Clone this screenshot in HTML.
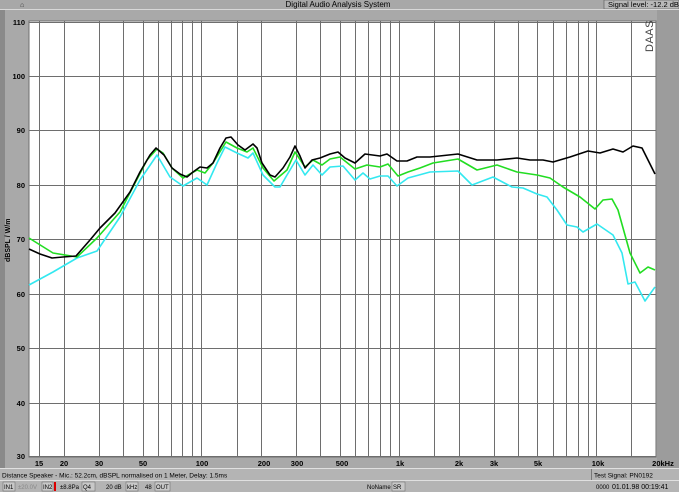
<!DOCTYPE html>
<html><head><meta charset="utf-8"><style>
html,body{margin:0;padding:0;width:679px;height:499px;overflow:hidden;background:#fff;font-family:"Liberation Sans",sans-serif}
svg{display:block}
</style></head><body>
<svg width="679" height="499" viewBox="0 0 679 499" font-family="Liberation Sans, sans-serif">
<rect x="0" y="0" width="679" height="499" fill="#fff"/>
<!-- title bar -->
<rect x="0" y="0" width="679" height="9" fill="#a8a8a8"/>
<text x="338" y="7" font-size="8" text-anchor="middle" fill="#000">Digital Audio Analysis System</text>
<rect x="604" y="0" width="75" height="9" fill="#b8b8b8" stroke="#555" stroke-width="0.6"/>
<text x="608" y="7" font-size="7.5" fill="#000">Signal level: -12.2 dBPa</text>
<text x="20" y="7" font-size="7" fill="#333">⌂</text>
<rect x="0" y="9" width="679" height="1" fill="#d8d8d8"/>
<!-- main gray -->
<rect x="0" y="10" width="679" height="458" fill="#a9a9a9"/>
<rect x="0" y="10" width="5" height="458" fill="#8a8a8a"/>
<rect x="657" y="10" width="22" height="458" fill="#9c9c9c"/>
<!-- plot -->
<rect x="29" y="21" width="627" height="436" fill="#fff"/>
<g stroke="#6e6e6e" stroke-width="1">
<line x1="29" y1="22.5" x2="656" y2="22.5"/>
<line x1="29" y1="76.5" x2="656" y2="76.5"/>
<line x1="29" y1="130.5" x2="656" y2="130.5"/>
<line x1="29" y1="185.5" x2="656" y2="185.5"/>
<line x1="29" y1="239.5" x2="656" y2="239.5"/>
<line x1="29" y1="294.5" x2="656" y2="294.5"/>
<line x1="29" y1="348.5" x2="656" y2="348.5"/>
<line x1="29" y1="403.5" x2="656" y2="403.5"/>
<line x1="29" y1="456.5" x2="656" y2="456.5"/>
</g>
<g stroke="#6e6e6e" stroke-width="1" id="vg">
<line x1="39.5" y1="21" x2="39.5" y2="457"/>
<line x1="64.5" y1="21" x2="64.5" y2="457"/>
<line x1="99.5" y1="21" x2="99.5" y2="457"/>
<line x1="123.5" y1="21" x2="123.5" y2="457"/>
<line x1="143.5" y1="21" x2="143.5" y2="457"/>
<line x1="158.5" y1="21" x2="158.5" y2="457"/>
<line x1="171.5" y1="21" x2="171.5" y2="457"/>
<line x1="182.5" y1="21" x2="182.5" y2="457"/>
<line x1="192.5" y1="21" x2="192.5" y2="457"/>
<line x1="201.5" y1="21" x2="201.5" y2="457"/>
<line x1="237.5" y1="21" x2="237.5" y2="457"/>
<line x1="261.5" y1="21" x2="261.5" y2="457"/>
<line x1="296.5" y1="21" x2="296.5" y2="457"/>
<line x1="320.5" y1="21" x2="320.5" y2="457"/>
<line x1="340.5" y1="21" x2="340.5" y2="457"/>
<line x1="355.5" y1="21" x2="355.5" y2="457"/>
<line x1="368.5" y1="21" x2="368.5" y2="457"/>
<line x1="380.5" y1="21" x2="380.5" y2="457"/>
<line x1="390.5" y1="21" x2="390.5" y2="457"/>
<line x1="399.5" y1="21" x2="399.5" y2="457"/>
<line x1="434.5" y1="21" x2="434.5" y2="457"/>
<line x1="459.5" y1="21" x2="459.5" y2="457"/>
<line x1="494.5" y1="21" x2="494.5" y2="457"/>
<line x1="518.5" y1="21" x2="518.5" y2="457"/>
<line x1="537.5" y1="21" x2="537.5" y2="457"/>
<line x1="553.5" y1="21" x2="553.5" y2="457"/>
<line x1="566.5" y1="21" x2="566.5" y2="457"/>
<line x1="578.5" y1="21" x2="578.5" y2="457"/>
<line x1="588.5" y1="21" x2="588.5" y2="457"/>
<line x1="596.5" y1="21" x2="596.5" y2="457"/>
<line x1="631.5" y1="21" x2="631.5" y2="457"/>
</g>
<rect x="29" y="21" width="627" height="436" fill="none" stroke="#6e6e6e" stroke-width="1"/>
<!-- DAAS -->
<text transform="translate(653,52) rotate(-90)" font-size="11" fill="#444" letter-spacing="0.5">DAAS</text>
<!-- y labels -->
<g font-size="7.5" font-weight="bold" fill="#000" text-anchor="end">
<text x="25" y="25">110</text><text x="25" y="79">100</text><text x="25" y="133">90</text>
<text x="25" y="188">80</text><text x="25" y="242">70</text><text x="25" y="297">60</text>
<text x="25" y="351">50</text><text x="25" y="406">40</text><text x="25" y="459">30</text>
</g>
<text transform="translate(10,262) rotate(-90)" font-size="7" font-weight="bold" fill="#000">dBSPL / W/m</text>
<!-- x labels -->
<g font-size="7.5" font-weight="bold" fill="#000" text-anchor="middle">
<text x="39" y="466">15</text><text x="64" y="466">20</text><text x="99" y="466">30</text>
<text x="143" y="466">50</text><text x="202" y="466">100</text><text x="264" y="466">200</text>
<text x="297" y="466">300</text><text x="342" y="466">500</text><text x="400" y="466">1k</text>
<text x="459" y="466">2k</text><text x="494" y="466">3k</text><text x="538" y="466">5k</text>
<text x="598" y="466">10k</text><text x="663" y="466">20kHz</text>
</g>
<!-- curves -->
<g fill="none" stroke-width="1.6" stroke-linejoin="round">
<polyline stroke="#33e8f0" points="29,285 53,272 77,258 97,251 120,217 140,180 157,155 170,177 183,186 197,178 207,185 217,163 225,147 237,153 248,158 253,153 263,175 275,187 280,187 287,175 296,160 305,175 313,165 322,175 330,167 343,166 355,180 363,173 370,179 380,176 388,176 397,186 408,178 430,172 458,171 472,185 493,177 512,187 523,188 537,194 547,197 557,210 567,225 577,227 583,232 597,224 613,235 622,253 628,284 635,282 645,301 655,287"/>
<polyline stroke="#22dd22" points="29,238 53,253 77,257 97,238 120,212 147,160 157,149 163,153 172,168 183,178 197,170 205,173 213,163 226,142 237,148 247,152 253,148 263,168 274,181 287,170 295,152 305,167 313,160 322,165 330,159 340,157 355,169 367,165 380,167 388,164 398,176 408,172 420,168 433,163 458,159 477,170 497,165 517,172 537,175 550,178 563,187 580,197 595,209 603,200 612,199 618,210 630,253 640,273 648,267 655,270"/>
<polyline stroke="#000" points="29,249 40,254 52,258 63,257 76,256 90,240 100,228 115,213 130,192 140,172 150,155 156,148 164,155 172,168 180,174 187,177 193,172 200,167 207,168 213,163 220,148 226,138 231,137 238,145 245,150 253,144 257,148 262,163 270,175 275,177 283,168 290,157 295,146 300,156 305,168 312,160 320,158 330,154 338,152 345,158 355,163 365,154 380,156 387,154 397,161 407,161 417,157 430,157 458,154 477,160 497,160 517,158 530,160 543,160 553,162 570,157 588,151 600,153 613,149 623,152 633,146 642,148 655,174"/>
</g>
<!-- status bars -->
<rect x="0" y="468" width="679" height="1" fill="#e0e0e0"/>
<rect x="0" y="469" width="679" height="11" fill="#b4b4b4"/>
<text x="2" y="477.5" font-size="6.5" fill="#000">Distance Speaker - Mic.: 52.2cm, dBSPL normalised on 1 Meter, Delay: 1.5ms</text>
<line x1="591.5" y1="469" x2="591.5" y2="480" stroke="#777"/>
<text x="594" y="477.5" font-size="6.5" fill="#000">Test Signal: PN0192</text>
<rect x="0" y="480" width="679" height="1" fill="#e0e0e0"/>
<rect x="0" y="481" width="679" height="11" fill="#b4b4b4"/>
<g font-size="6" fill="#000">
<rect x="3" y="482" width="12" height="9" fill="#c8c8c8" stroke="#666" stroke-width="0.5"/><text x="4" y="489">IN1</text>
<text x="18" y="489" fill="#888">±20.0V</text>
<rect x="42" y="482" width="11" height="9" fill="#c8c8c8" stroke="#666" stroke-width="0.5"/><text x="43" y="489">IN2</text>
<rect x="54" y="482" width="2" height="9" fill="#d00"/>
<text x="60" y="489">±8.8Pa</text>
<rect x="82" y="482" width="13" height="9" fill="#c8c8c8" stroke="#666" stroke-width="0.5"/><text x="83" y="489">Q4</text>
<text x="106" y="489">20 dB</text>
<rect x="126" y="482" width="12" height="9" fill="#c8c8c8" stroke="#666" stroke-width="0.5"/><text x="127" y="489">kHz</text>
<text x="145" y="489">48</text>
<rect x="155" y="482" width="15" height="9" fill="#c8c8c8" stroke="#666" stroke-width="0.5"/><text x="156" y="489">OUT</text>
<text x="367" y="489">NoName</text>
<rect x="392" y="482" width="13" height="9" fill="#c8c8c8" stroke="#666" stroke-width="0.5"/><text x="393" y="489">SR</text>
<text x="596" y="489">0000</text>
<text x="612" y="489" font-size="7">01.01.98  00:19:41</text>
</g>
<rect x="0" y="492" width="679" height="7" fill="#fff"/>
</svg>
</body></html>
